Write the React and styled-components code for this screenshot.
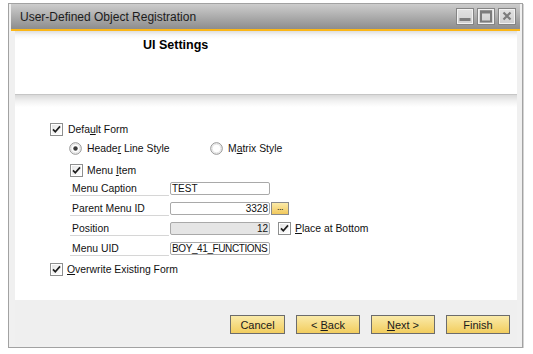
import styled, { createGlobalStyle } from 'styled-components';

const GlobalStyle = createGlobalStyle`
  html, body {
    margin: 0;
    padding: 0;
    background: #ffffff;
  }
  body {
    font-family: "Liberation Sans", Arial, sans-serif;
    color: #111;
  }
`;

const Window = styled.div`
  box-sizing: border-box;
  margin: 3px 0 0 8px;
  width: 515px;
  height: 345px;
  border: 1px solid #a2a2a2;
  box-shadow: 1px 1px 0 #d4d4d4;
  background: #f0f0f0;
  padding: 0 2px 2px;
  display: flex;
  flex-direction: column;
`;

const TitleBar = styled.div`
  height: 25px;
  flex: none;
  display: flex;
  align-items: center;
  padding: 0 4px 0 9px;
  background: linear-gradient(#cdcdcd, #8d8d8d);
  border-bottom: 2px solid #fbb617;
`;

const TitleText = styled.div`
  flex: 1;
  font-size: 12px;
  color: #1c1c1c;
`;

const WinButtons = styled.div`
  display: flex;
  gap: 3px;
`;

const WinButton = styled.div`
  box-sizing: border-box;
  width: 18px;
  height: 17px;
  border: 1px solid #858585;
  box-shadow: inset 0 0 0 1px #f2f2f2;
  background: linear-gradient(#e2e2e2, #cfcfcf);
  display: flex;
  align-items: center;
  justify-content: center;
`;

const Body = styled.div`
  flex: 1;
  margin: 0 3px 0 4px;
  display: flex;
  flex-direction: column;
`;

const Header = styled.div`
  height: 64px;
  flex: none;
  border-bottom: 1px solid #c6c6c6;
  background: linear-gradient(#dedede 0, #f6f6f6 4px, #ffffff 8px);
  padding: 7px 0 0 128px;
  box-sizing: border-box;
`;

const HeaderTitle = styled.div`
  font-size: 12.5px;
  font-weight: bold;
  line-height: 15px;
  color: #000;
`;

const Main = styled.div`
  height: 205px;
  flex: none;
  box-sizing: border-box;
  background: linear-gradient(#d9d9d9 0, #f1f1f1 6px, #ffffff 12px);
  padding: 25px 0 0 35px;
  display: flex;
  flex-direction: column;
  font-size: 10.4px;
`;

const Line = styled.div`
  display: flex;
  align-items: center;
  height: ${(p) => p.$h || 18}px;
  margin-left: ${(p) => p.$indent || 0}px;
  margin-top: ${(p) => p.$top || 0}px;
`;

const Option = styled.label`
  display: flex;
  align-items: center;
  gap: ${(p) => p.$gap || 5}px;
  width: ${(p) => (p.$w ? `${p.$w}px` : 'auto')};
  white-space: nowrap;
`;

const U = styled.span`
  text-decoration: underline;
`;

const Fields = styled.div`
  margin-left: 20px;
  display: flex;
  flex-direction: column;
`;

const FieldRow = styled.div`
  height: 20px;
  display: flex;
  align-items: flex-end;
`;

const FieldLabel = styled.div`
  box-sizing: border-box;
  width: 99px;
  height: 20px;
  padding: 6px 0 0 2px;
  line-height: 13px;
  border-bottom: 1px solid #d6d6d6;
  margin-right: 1px;
`;

const Input = styled.div`
  box-sizing: border-box;
  width: 100px;
  height: 13px;
  margin-bottom: 1px;
  border: 1px solid #a9a9a9;
  border-radius: 2px;
  background: ${(p) => (p.$disabled ? '#e5e5e5' : '#ffffff')};
  text-align: ${(p) => (p.$right ? 'right' : 'left')};
  font-size: 10px;
  letter-spacing: ${(p) => (p.$tight ? '-0.4px' : '0')};
  line-height: 11px;
  padding: 0 1px;
  overflow: hidden;
  white-space: nowrap;
`;

const Ellipsis = styled.div`
  box-sizing: border-box;
  width: 18px;
  height: 13px;
  margin: 0 0 1px 1px;
  border: 1px solid #8a8a8a;
  background: linear-gradient(#fbeaa8, #f1c85c);
  font-size: 9px;
  line-height: 8px;
  text-align: center;
  letter-spacing: -0.5px;
`;

const Side = styled.div`
  margin: 0 0 1px 8px;
  align-self: flex-end;
  height: 13px;
  display: flex;
  align-items: center;
`;

const Footer = styled.div`
  flex: 1;
  display: flex;
  justify-content: flex-end;
  align-items: flex-start;
  gap: 11px;
  padding: 15px 7px 0 0;
  background: #efefef;
`;

const Button = styled.button`
  box-sizing: border-box;
  width: ${(p) => p.$w || 64}px;
  height: 19px;
  padding: 0;
  border: 1px solid #6c6c6c;
  background: linear-gradient(#faeaa9, #f2cd5e);
  font-family: "Liberation Sans", Arial, sans-serif;
  font-size: 11px;
  color: #1a1a1a;
`;

function CheckBox() {
  return (
    <svg width="13" height="13" viewBox="0 0 13 13">
      <defs>
        <linearGradient id="cbg" x1="0" y1="0" x2="1" y2="1">
          <stop offset="0" stopColor="#e6e6e6" />
          <stop offset="1" stopColor="#ffffff" />
        </linearGradient>
      </defs>
      <rect x="0.5" y="0.5" width="12" height="12" fill="#fff" stroke="#8e8f8f" />
      <rect x="2" y="2" width="9" height="9" fill="url(#cbg)" />
      <path d="M3 6.3 L5.3 8.8 L10 3.4" fill="none" stroke="#1e1e1e" strokeWidth="1.7" />
    </svg>
  );
}

function Radio({ checked }) {
  return (
    <svg width="13" height="13" viewBox="0 0 13 13">
      <circle cx="6.5" cy="6.5" r="5.8" fill="#f4f4f4" stroke="#929292" />
      <circle cx="6.5" cy="6.5" r="4.3" fill="#ffffff" stroke="#dedede" strokeWidth="0.8" />
      {checked && <circle cx="6.5" cy="6.5" r="2.2" fill="#3a3a3a" />}
    </svg>
  );
}

const glyph = '#7c7c7c';

export default function App() {
  return (
    <>
      <GlobalStyle />
      <Window>
        <TitleBar>
          <TitleText>User-Defined Object Registration</TitleText>
          <WinButtons>
            <WinButton>
              <svg width="14" height="13" viewBox="0 0 14 13">
                <rect x="1.5" y="8" width="11" height="3" fill={glyph} />
              </svg>
            </WinButton>
            <WinButton>
              <svg width="14" height="13" viewBox="0 0 14 13">
                <rect x="2" y="1.5" width="10" height="10" fill="none" stroke={glyph} strokeWidth="2" />
                <rect x="1" y="0.5" width="12" height="3" fill={glyph} />
              </svg>
            </WinButton>
            <WinButton>
              <svg width="14" height="13" viewBox="0 0 14 13">
                <path d="M3.5 2.5 L10.5 9.5 M10.5 2.5 L3.5 9.5" stroke={glyph} strokeWidth="2.2" />
              </svg>
            </WinButton>
          </WinButtons>
        </TitleBar>
        <Body>
          <Header>
            <HeaderTitle>UI Settings</HeaderTitle>
          </Header>
          <Main>
            <Line>
              <Option>
                <CheckBox />
                <span>
                  Defa<U>u</U>lt Form
                </span>
              </Option>
            </Line>
            <Line $indent={19} $top={1}>
              <Option $w={141}>
                <Radio checked />
                <span>
                  Heade<U>r</U> Line Style
                </span>
              </Option>
              <Option>
                <Radio />
                <span>
                  M<U>a</U>trix Style
                </span>
              </Option>
            </Line>
            <Line $indent={20} $top={7} $h={12}>
              <Option $gap={4}>
                <CheckBox />
                <span>
                  Menu <U>I</U>tem
                </span>
              </Option>
            </Line>
            <Fields>
              <FieldRow>
                <FieldLabel>Menu Caption</FieldLabel>
                <Input>TEST</Input>
              </FieldRow>
              <FieldRow>
                <FieldLabel>Parent Menu ID</FieldLabel>
                <Input $right>3328</Input>
                <Ellipsis>...</Ellipsis>
              </FieldRow>
              <FieldRow>
                <FieldLabel>Position</FieldLabel>
                <Input $right $disabled>
                  12
                </Input>
                <Side>
                  <Option $gap={4}>
                    <CheckBox />
                    <span>
                      <U>P</U>lace at Bottom
                    </span>
                  </Option>
                </Side>
              </FieldRow>
              <FieldRow>
                <FieldLabel>Menu UID</FieldLabel>
                <Input $tight>BOY_41_FUNCTIONS</Input>
              </FieldRow>
            </Fields>
            <Line $top={5} $h={16}>
              <Option $gap={4}>
                <CheckBox />
                <span>
                  <U>O</U>verwrite Existing Form
                </span>
              </Option>
            </Line>
          </Main>
          <Footer>
            <Button $w={55}>Cancel</Button>
            <Button>
              &lt; <U>B</U>ack
            </Button>
            <Button>
              <U>N</U>ext &gt;
            </Button>
            <Button>Finish</Button>
          </Footer>
        </Body>
      </Window>
    </>
  );
}
